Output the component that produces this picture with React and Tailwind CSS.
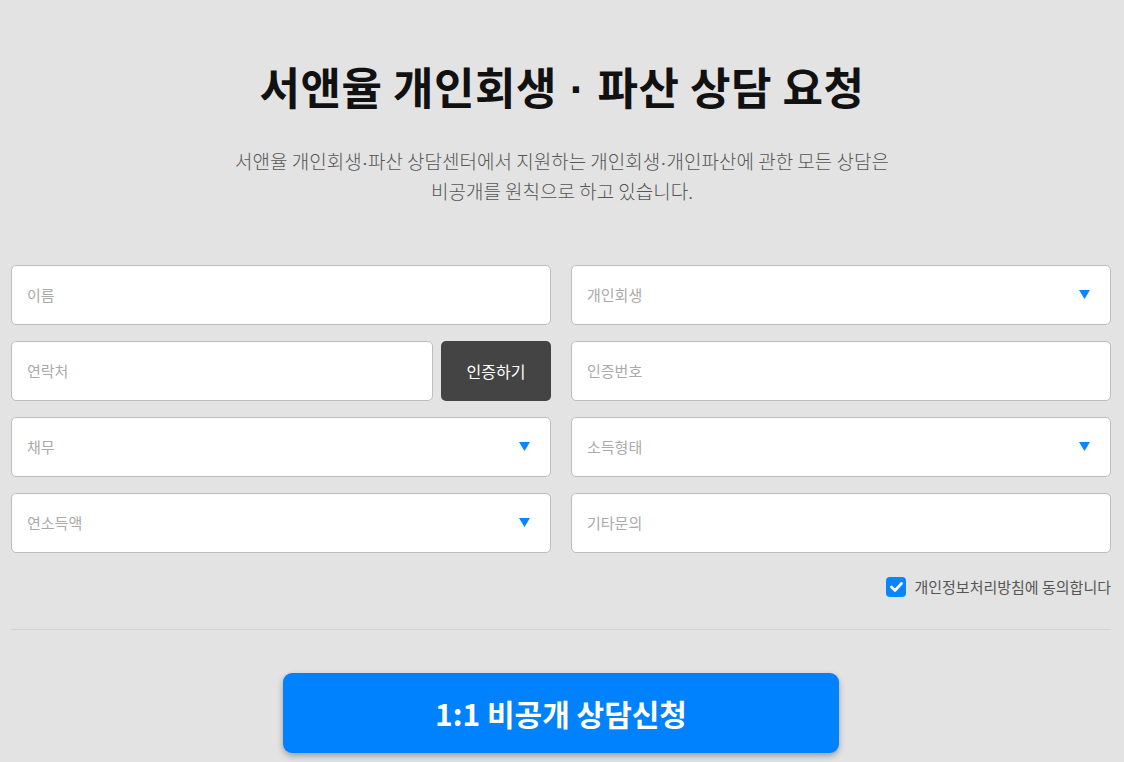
const font = { fontFamily: '"Noto Sans CJK KR", "Noto Sans", sans-serif' };
const dot = { fontFamily: '"Liberation Sans", sans-serif' };

function Chevron() {
  return (
    <svg width="11" height="9" viewBox="0 0 11 9" className="flex-none">
      <path d="M0 0 L11 0 L5.5 9 Z" fill="#0a84ff" />
    </svg>
  );
}

function Field({ label, select = false, className = "" }) {
  return (
    <div
      className={`flex h-[60px] items-center justify-between rounded-[5px] border border-[#bdbdbd] bg-white pl-[15px] pr-[20px] ${className}`}
    >
      <span className="text-[15px] text-[#aaaaaa]">{label}</span>
      {select && <Chevron />}
    </div>
  );
}

export default function App() {
  return (
    <div className="min-h-[762px] w-full bg-[#e3e3e3] pt-[60px]" style={font}>
      <h1 className="text-center text-[44px] font-bold leading-[1.2] tracking-[0.5px] text-[#111111]">
        서앤율 개인회생<span style={dot}> · </span>파산 상담 요청
      </h1>
      <p className="mt-[30px] text-center text-[19px] font-light leading-[28px] text-[#555555]">
        서앤율 개인회생<span style={dot}>·</span>파산 상담센터에서 지원하는 개인회생<span style={dot}>·</span>개인파산에 관한 모든 상담은
        <br />
        비공개를 원칙으로 하고 있습니다.
      </p>

      <div className="mx-[11px] mt-[60px] w-[1100px]">
        <div className="grid grid-cols-2 gap-x-[20px] gap-y-[16px]">
          <Field label="이름" />
          <Field label="개인회생" select />
          <div className="flex gap-[8px]">
            <Field label="연락처" className="flex-1" />
            <button className="h-[60px] w-[110px] rounded-[5px] bg-[#444444] text-[16px] text-white">
              인증하기
            </button>
          </div>
          <Field label="인증번호" />
          <Field label="채무" select />
          <Field label="소득형태" select />
          <Field label="연소득액" select />
          <Field label="기타문의" />
        </div>

        <div className="mt-[23px] flex items-center justify-end gap-[8px]">
          <span className="flex h-[20px] w-[20px] items-center justify-center rounded-[4px] bg-[#0a84ff]">
            <svg width="13" height="10" viewBox="0 0 13 10">
              <path d="M1.5 5 L5 8.5 L11.5 1.5" fill="none" stroke="white" strokeWidth="2.6" strokeLinecap="round" strokeLinejoin="round" />
            </svg>
          </span>
          <span className="text-[15px] text-[#555555]">개인정보처리방침에 동의합니다</span>
        </div>

        <div className="mt-[31px] border-t border-[#d3d3d3]" />

        <div className="mt-[43px] flex justify-center">
          <button className="h-[80px] w-[556px] rounded-[9px] bg-[#0082ff] text-[30px] font-bold text-white shadow-[0_3px_6px_rgba(0,0,0,0.3)]">
            1:1 비공개 상담신청
          </button>
        </div>
      </div>
    </div>
  );
}
